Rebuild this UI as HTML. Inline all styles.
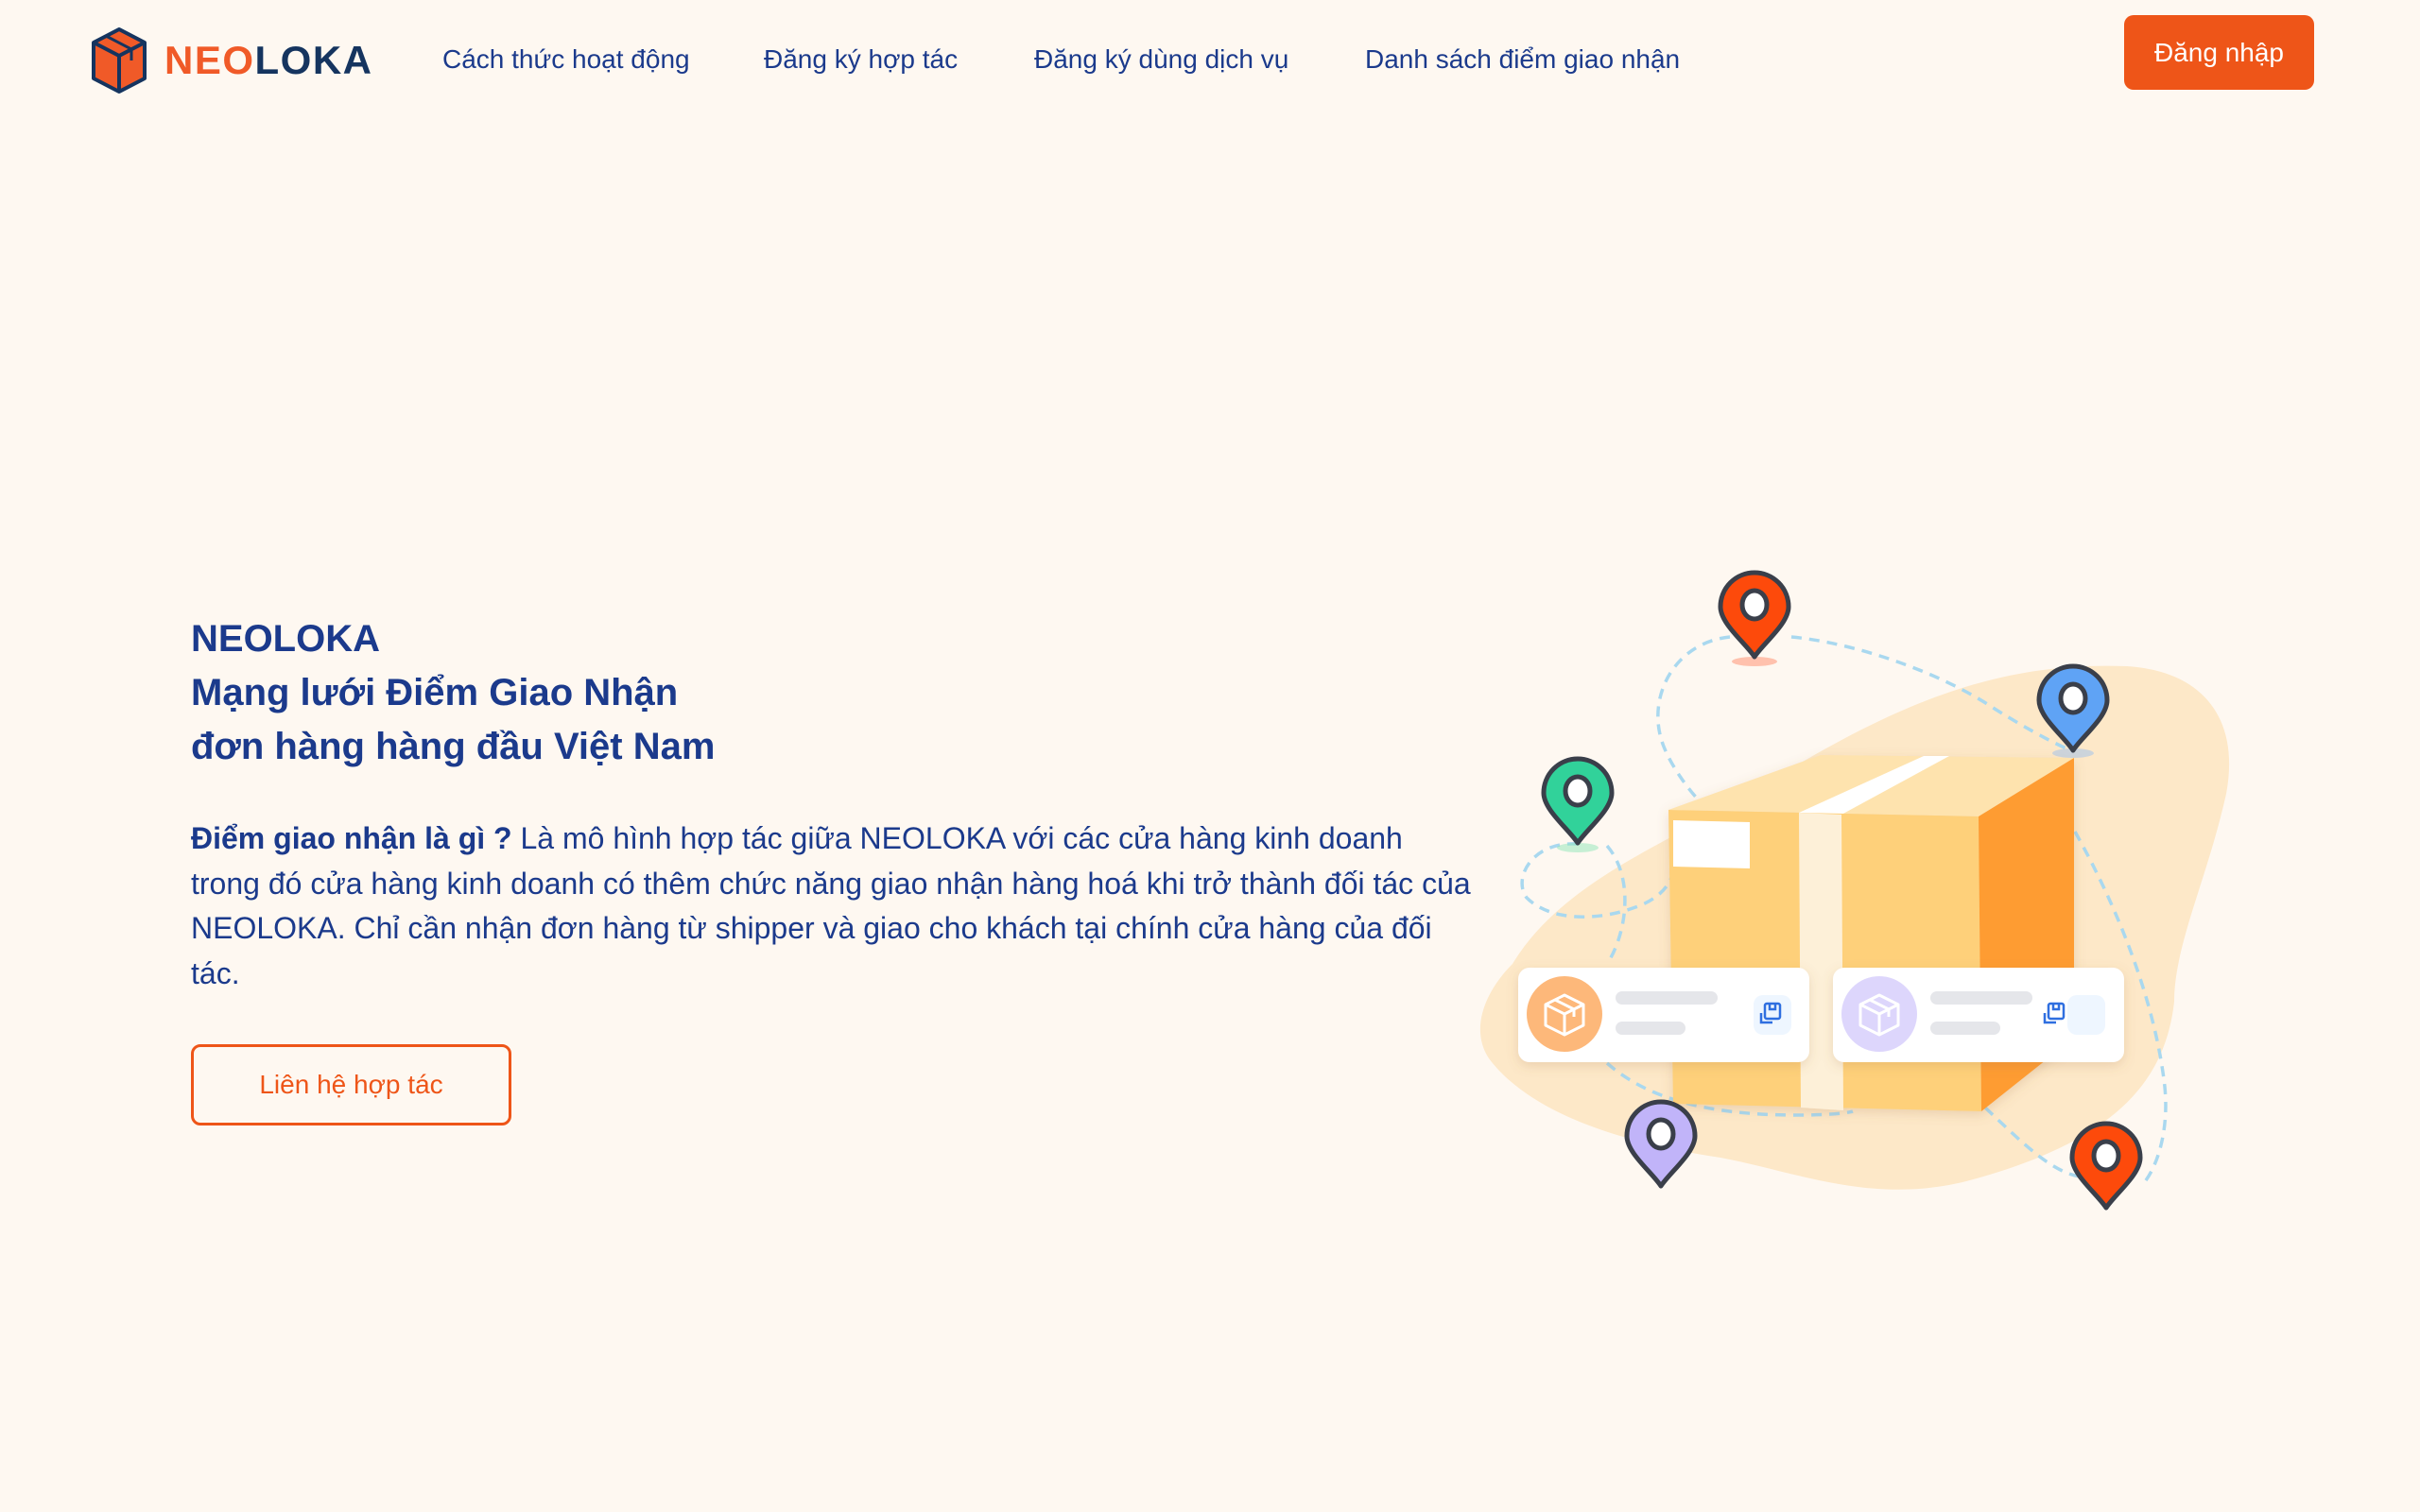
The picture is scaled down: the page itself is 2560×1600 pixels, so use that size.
<!DOCTYPE html>
<html><head><meta charset="utf-8"><style>
*{margin:0;padding:0;box-sizing:border-box}
body{width:2560px;height:1600px;background:#fef8f1;font-family:"Liberation Sans",Arial,sans-serif;color:#1b3a8c;position:relative;overflow:hidden}
.nav a{position:absolute;top:47px;font-size:28px;color:#1b3a8c;text-decoration:none;white-space:nowrap}
.logo{position:absolute;left:174px;top:40px;font-size:42px;font-weight:bold;letter-spacing:1.5px}
.btn{position:absolute;left:2247px;top:16px;width:201px;height:79px;background:#ee5518;color:#fff;border-radius:10px;font-size:28px;text-align:center;line-height:79px}
h1{position:absolute;left:202px;top:648px;font-size:40px;line-height:57px;font-weight:bold}
p{position:absolute;left:202px;top:864px;font-size:32px;line-height:47.5px;white-space:nowrap}
.cta{position:absolute;left:202px;top:1105px;width:339px;height:86px;border:3px solid #ee5518;border-radius:10px;color:#ee5518;font-size:28px;text-align:center;line-height:80px}
</style></head><body>
<svg style="position:absolute;left:95px;top:28px" width="62" height="72" viewBox="0 0 62 72">
<polygon points="31,3 58,17 58,55 31,69 4,55 4,17" fill="#f05a28" stroke="#15345f" stroke-width="4" stroke-linejoin="round"/>
<polyline points="4,17 31,31 58,17" fill="none" stroke="#15345f" stroke-width="4"/>
<line x1="31" y1="31" x2="31" y2="69" stroke="#15345f" stroke-width="4"/>
<polyline points="17,10 44,24 44,36" fill="none" stroke="#15345f" stroke-width="3"/>
</svg>
<div class="logo"><span style="color:#f05a28">NEO</span><span style="color:#15345f">LOKA</span></div>
<div class="nav">
<a style="left:468px">Cách thức hoạt động</a>
<a style="left:808px">Đăng ký hợp tác</a>
<a style="left:1094px">Đăng ký dùng dịch vụ</a>
<a style="left:1444px">Danh sách điểm giao nhận</a>
</div>
<div class="btn">Đăng nhập</div>
<h1>NEOLOKA<br>Mạng lưới Điểm Giao Nhận<br>đơn hàng hàng đầu Việt Nam</h1>
<p><b>Điểm giao nhận là gì ?</b> Là mô hình hợp tác giữa NEOLOKA với các cửa hàng kinh doanh<br>trong đó cửa hàng kinh doanh có thêm chức năng giao nhận hàng hoá khi trở thành đối tác của<br>NEOLOKA. Chỉ cần nhận đơn hàng từ shipper và giao cho khách tại chính cửa hàng của đối<br>tác.</p>
<div class="cta">Liên hệ hợp tác</div>

<svg style="position:absolute;left:0;top:0" width="2560" height="1600" viewBox="0 0 2560 1600">
<defs>
<filter id="sh" x="-20%" y="-20%" width="140%" height="140%"><feDropShadow dx="0" dy="4" stdDeviation="6" flood-color="#a07040" flood-opacity="0.2"/></filter>
<g id="pin"><path d="M0,53 C-10,38 -36,18 -36,0 A36,36 0 0 1 36,0 C36,18 10,38 0,53 Z" stroke="#3a3f4a" stroke-width="5" stroke-linejoin="round"/><ellipse cx="0" cy="-2" rx="13" ry="15" fill="#fff" stroke="#3a3f4a" stroke-width="5"/></g>
</defs>
<path d="M1600,1020 C1660,920 1800,880 1900,810 C2020,740 2120,700 2250,705 C2330,710 2370,760 2355,840 C2335,930 2300,1000 2300,1060 C2290,1150 2230,1210 2080,1250 C1980,1275 1900,1240 1820,1225 C1720,1210 1620,1180 1575,1120 C1555,1090 1570,1050 1600,1020 Z" fill="#fde8c8"/>
<g fill="none" stroke="#a9d8ef" stroke-width="3.5" stroke-dasharray="11 8">
<path d="M1895,674 C1960,680 2050,710 2110,750 C2150,775 2180,790 2193,795"/>
<path d="M1830,674 C1770,680 1740,740 1760,790 C1770,815 1790,840 1800,850"/>
<path d="M1669,893 C1620,890 1600,930 1615,950 C1640,975 1690,975 1730,960 C1760,950 1770,930 1770,920"/>
<path d="M1700,895 C1730,930 1720,990 1700,1020"/>
<path d="M1700,1125 C1740,1160 1800,1180 1900,1180 C1950,1180 1960,1176 1960,1176"/>
<path d="M2195,880 C2240,960 2280,1060 2290,1150 C2295,1200 2280,1240 2265,1255"/>
<path d="M2100,1172 C2140,1210 2170,1240 2200,1245"/>
</g>
<g filter="url(#sh)">
<polygon points="1765,857 1926,799 2194,802 2093,864" fill="#fee3ae"/>
<polygon points="1903,860 2035,800 2062,800 1948,862" fill="#fff"/>
<polygon points="1765,857 2093,864 2096,1176 1770,1168" fill="#fed07a"/>
<polygon points="1903,860 1948,862 1950,1175 1905,1172" fill="#fdf0d8"/>
<polygon points="2093,864 2194,802 2194,1098 2096,1176" fill="#fe9c32"/>
<polygon points="1770,868 1851,870 1851,919 1770,917" fill="#fff"/>
</g>
<g filter="url(#sh)">
<rect x="1606" y="1024" width="308" height="100" rx="12" fill="#fff"/>
<rect x="1939" y="1024" width="308" height="100" rx="12" fill="#fff"/>
</g>
<circle cx="1655" cy="1073" r="40" fill="#fdb87a"/>
<circle cx="1988" cy="1073" r="40" fill="#ddd6fc"/>
<g fill="none" stroke="#fff" stroke-width="3" stroke-linejoin="round">
<path d="M1655,1053 L1675,1063 L1675,1085 L1655,1095 L1635,1085 L1635,1063 Z M1635,1063 L1655,1073 L1675,1063 M1655,1073 L1655,1095 M1645,1058 L1665,1068 L1665,1076"/>
<path d="M1988,1053 L2008,1063 L2008,1085 L1988,1095 L1968,1085 L1968,1063 Z M1968,1063 L1988,1073 L2008,1063 M1988,1073 L1988,1095 M1978,1058 L1998,1068 L1998,1076"/>
</g>
<g fill="#e5e6ea">
<rect x="1709" y="1049" width="108" height="14" rx="7"/><rect x="1709" y="1081" width="74" height="14" rx="7"/>
<rect x="2042" y="1049" width="108" height="14" rx="7"/><rect x="2042" y="1081" width="74" height="14" rx="7"/>
</g>
<rect x="1855" y="1053" width="40" height="42" rx="10" fill="#eef6ff"/>
<rect x="2187" y="1053" width="40" height="42" rx="10" fill="#eef6ff"/>
<g fill="none" stroke="#2f6fe0" stroke-width="2.5">
<rect x="1867" y="1062" width="16" height="16" rx="2"/><path d="M1872,1062 v6 h6 v-6 M1863,1072 v10 h12"/>
<rect x="2167" y="1062" width="16" height="16" rx="2"/><path d="M2172,1062 v6 h6 v-6 M2163,1072 v10 h12"/>
</g>
<g>
<ellipse cx="1856" cy="700" rx="24" ry="5" fill="#ff8a6a" opacity="0.5"/>
<ellipse cx="1669" cy="897" rx="22" ry="5" fill="#8ee6b8" opacity="0.5"/>
<ellipse cx="2193" cy="797" rx="22" ry="5" fill="#9cc0ee" opacity="0.5"/>
<use href="#pin" x="1856" y="642" fill="#fd4a0b"/>
<use href="#pin" x="2193" y="741" fill="#5fa3f5"/>
<use href="#pin" x="1669" y="839" fill="#31d29a"/>
<use href="#pin" x="1757" y="1202" fill="#c1b4f9"/>
<use href="#pin" x="2228" y="1225" fill="#fd4a0b"/>
</g>
</svg>
</body></html>
